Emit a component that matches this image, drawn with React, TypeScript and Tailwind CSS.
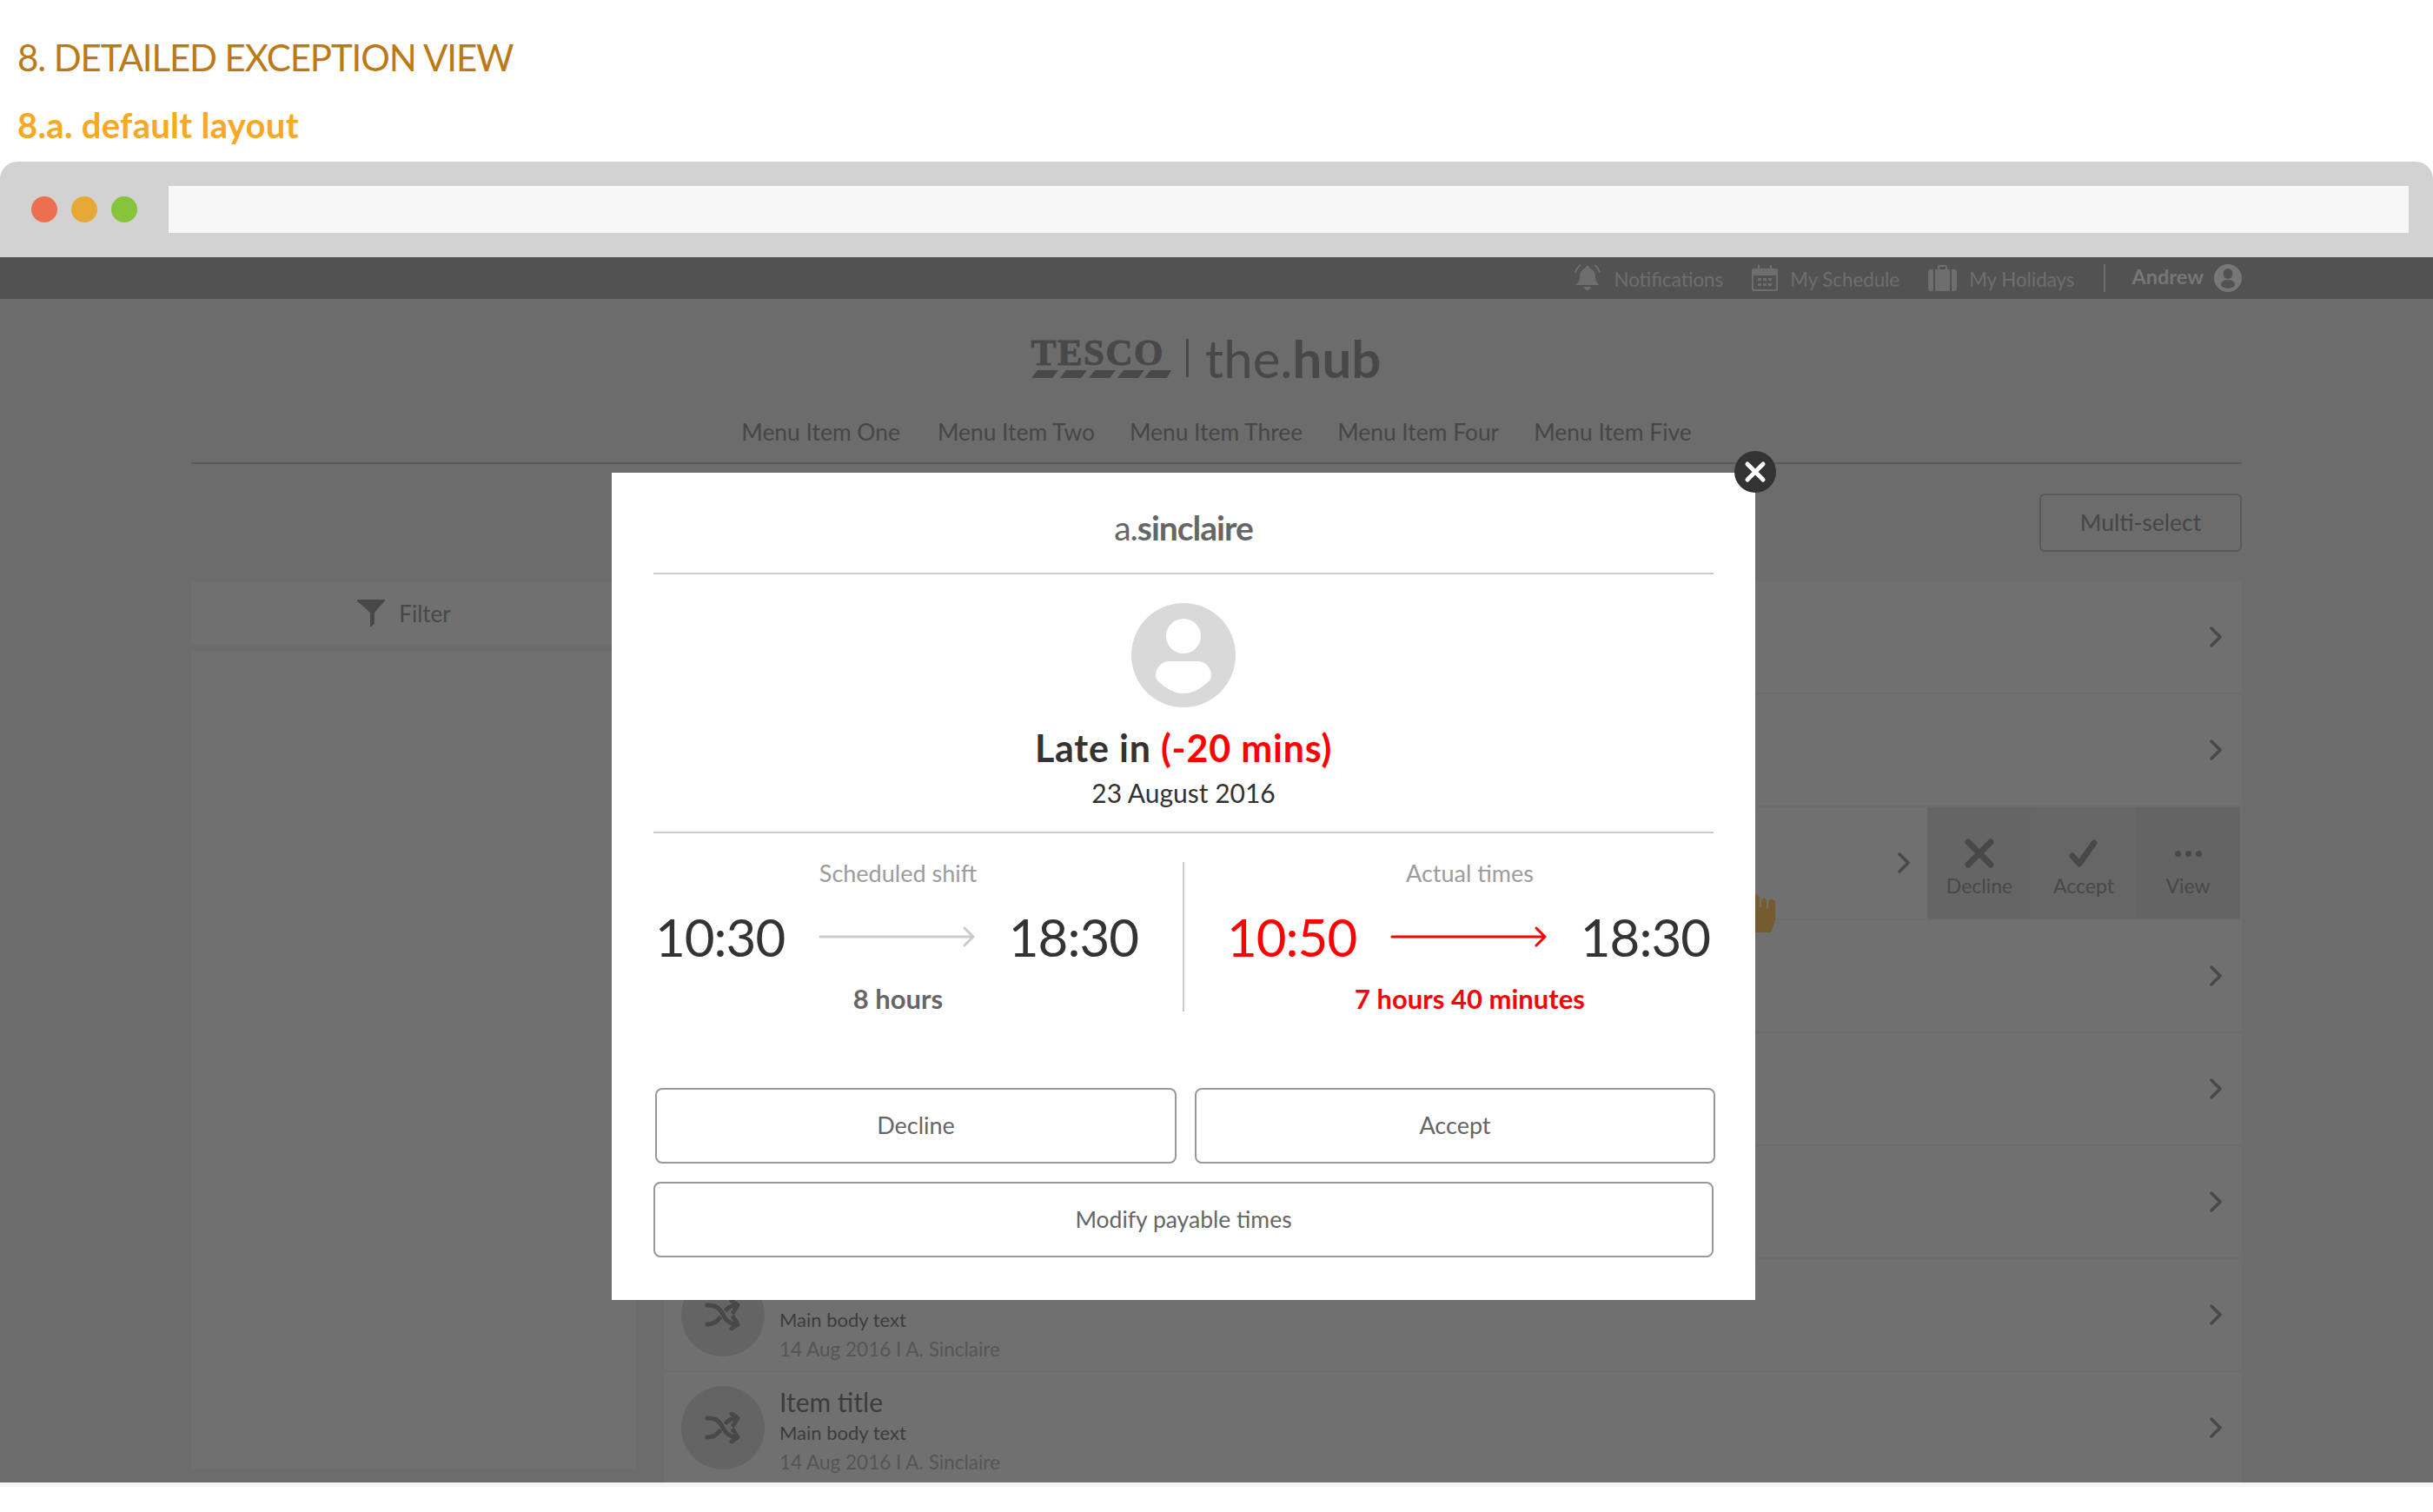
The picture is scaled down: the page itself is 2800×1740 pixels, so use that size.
import { ReactNode } from 'react';

const rows = [0, 1, 2, 3, 4, 5, 6, 7];

function Chevron({ className = '' }: { className?: string }) {
    return (
        <svg className={className} width="14" height="24" viewBox="0 0 14 24" fill="none" stroke="#484848" strokeWidth="3.5" strokeLinecap="round" strokeLinejoin="round">
            <path d="M2 2l10 10L2 22" />
        </svg>
    );
}

function ShuffleIcon() {
    return (
        <svg width="42" height="36" viewBox="0 0 42 36" fill="none" stroke="#484848" strokeWidth="5" strokeLinecap="round" strokeLinejoin="round">
            <path d="M3 7c12 0 15 5 18 11s7 11 16 11" />
            <path d="M3 29c7 0 11-3 14-7M25 12c3-3 6-5 12-5" />
            <path d="M31 2l7 5-5 8M33 21l5 8-7 5" />
        </svg>
    );
}

function TopLink({ icon, label }: { icon: ReactNode; label: string }) {
    return (
        <div className="flex items-center gap-[14px]">
            {icon}
            <span className="text-[22.3px] leading-none text-[#6e6e6e] mt-[4px]">{label}</span>
        </div>
    );
}

function ActionCell({ label, shade, children }: { label: string; shade: string; children: ReactNode }) {
    return (
        <div className={`flex-1 flex flex-col items-center pt-[36px] ${shade}`}>
            {children}
            <span className="text-[23px] leading-[30px] mt-[5px] text-[#484848]">{label}</span>
        </div>
    );
}

function ListRow({ index }: { index: number }) {
    const swiped = index === 2;
    // rows above the modal's bottom edge show nothing but their chevron
    const hasContent = index >= 6;
    return (
        <div className="relative h-[128px] flex items-center bg-[#707070] shrink-0">
            <div className="flex flex-1 items-center pl-[20px]">
                {hasContent && (
                    <>
                        <div className="w-[96px] h-[96px] rounded-full bg-[#646464] flex items-center justify-center shrink-0">
                            <ShuffleIcon />
                        </div>
                        <div className="ml-[17px] pt-[46px] flex flex-col text-[#3c3c3c]">
                            {index === 7 && <span className="-mt-[38px] text-[30px] leading-[38px]">Item title</span>}
                            <span className="text-[22px] leading-[34px]">Main body text</span>
                            <span className="text-[22.5px] leading-[34px] text-[#555555]">14 Aug 2016 I A. Sinclaire</span>
                        </div>
                    </>
                )}
            </div>
            {swiped ? (
                <>
                    <Chevron className="mr-[20px]" />
                    <div className="flex h-full w-[360px] mr-[2px]">
                        <ActionCell label="Decline" shade="bg-[#656565]">
                            <svg width="34" height="34" viewBox="0 0 34 34" stroke="#484848" strokeWidth="7" strokeLinecap="round"><path d="M4 4l26 26M30 4L4 30" /></svg>
                        </ActionCell>
                        <ActionCell label="Accept" shade="bg-[#666666]">
                            <svg width="34" height="34" viewBox="0 0 34 34" fill="none" stroke="#484848" strokeWidth="7" strokeLinecap="round" strokeLinejoin="round"><path d="M4 20l8 9L29 5" /></svg>
                        </ActionCell>
                        <ActionCell label="View" shade="bg-[#646464]">
                            <div className="h-[34px] flex items-center gap-[5px]">
                                <span className="w-[7px] h-[7px] rounded-full bg-[#484848]" />
                                <span className="w-[7px] h-[7px] rounded-full bg-[#484848]" />
                                <span className="w-[7px] h-[7px] rounded-full bg-[#484848]" />
                            </div>
                        </ActionCell>
                    </div>
                    {/* hand cursor, mostly behind the modal */}
                    <svg className="absolute z-10 left-[1236px] top-[100px]" width="44" height="45" viewBox="0 0 44 45" fill="#745b30">
                        <path d="M10 44V4a5 4 0 015-4h5a5 5 0 015 5v10h2V8a3 3 0 016 0v8h2v-6a4 4 0 018 0v20l-5 14z" />
                    </svg>
                </>
            ) : (
                <Chevron className="mr-[23px]" />
            )}
        </div>
    );
}

function TimeBlock({ title, start, end, total, late }: { title: string; start: string; end: string; total: string; late: boolean }) {
    const stroke = late ? '#ff0000' : '#cccccc';
    return (
        <div className="w-[553px] -mt-[4px] flex flex-col items-center">
            <span className="text-[27px] leading-[34px] text-[#9c9c9c]">{title}</span>
            <div className="w-full flex items-center justify-between mt-[21px] text-[60px] leading-[70px] tracking-[-1px] text-[#333333]">
                <span className={`-ml-[3px] ${late ? 'text-[#ff0000]' : ''}`}>{start}</span>
                <svg width="181" height="26" viewBox="0 0 181 26" fill="none" stroke={stroke} strokeWidth="3" strokeLinecap="round" strokeLinejoin="round">
                    <path d="M2 13h176M168 3l10 10-10 10" />
                </svg>
                <span>{end}</span>
            </div>
            <span className={`mt-[18px] text-[31px] leading-[36px] font-bold ${late ? 'text-[#ff0000]' : 'text-[#666666]'}`}>{total}</span>
        </div>
    );
}

export default function App() {
    return (
        <div className="relative h-[1740px] w-[2800px] overflow-hidden bg-white font-['Lato','Noto_Sans',sans-serif]">
            {/* Headings */}
            <div className="pl-[20px] pt-[42px] h-[186px]">
                <h1 className="text-[42px] leading-[48px] tracking-[-1.1px] text-[#bc7a17]">8. DETAILED EXCEPTION VIEW</h1>
                <h2 className="mt-[32px] text-[40px] leading-[44px] tracking-[0.3px] font-bold text-[#f9a825]">8.a. default layout</h2>
            </div>

            {/* Browser chrome */}
            <div className="h-[110px] rounded-t-[20px] bg-[#d2d2d2] flex items-center pl-[36px] pr-[28px]">
                <div className="flex gap-[16px]">
                    <span className="w-[30px] h-[30px] rounded-full bg-[#ec7050]" />
                    <span className="w-[30px] h-[30px] rounded-full bg-[#e6a935]" />
                    <span className="w-[30px] h-[30px] rounded-full bg-[#87c33b]" />
                </div>
                <div className="ml-[36px] flex-1 h-[54px] bg-[#f7f7f7]" />
            </div>

            {/* Dimmed page */}
            <div className="h-[1410px] overflow-hidden bg-[#6c6c6c]">
                <div className="h-[48px] bg-[#525252] flex items-center justify-end pr-[220px]">
                    <div className="flex items-center gap-[33px]">
                        <TopLink
                            label="Notifications"
                            icon={
                                <svg width="34" height="32" viewBox="0 0 34 32" fill="#6e6e6e">
                                    <path d="M17 2a2.5 2.5 0 012.5 2.5C24 6 26 10 26 15c0 4 2 7 5 9H3c3-2 5-5 5-9 0-5 2-9 6.5-10.5A2.5 2.5 0 0117 2zM13 26h8c0 2-2 4-4 4s-4-2-4-4z" />
                                    <path d="M9 1C6 3 4 6 3 10M25 1c3 2 5 5 6 9" fill="none" stroke="#6e6e6e" strokeWidth="2" />
                                </svg>
                            }
                        />
                        <TopLink
                            label="My Schedule"
                            icon={
                                <svg width="30" height="30" viewBox="0 0 30 30" fill="#6e6e6e">
                                    <path fillRule="evenodd" d="M2 4h5V0h2v4h12V0h2v4h5a2 2 0 012 2v22a2 2 0 01-2 2H2a2 2 0 01-2-2V6a2 2 0 012-2zm0 8v16h26V12zm5 3h4v3H7zm6 0h4v3h-4zm6 0h4v3h-4zM7 21h4v3H7zm6 0h4v3h-4zm6 0h4v3h-4z" />
                                </svg>
                            }
                        />
                        <TopLink
                            label="My Holidays"
                            icon={
                                <svg width="33" height="30" viewBox="0 0 33 30" fill="#6e6e6e">
                                    <path fillRule="evenodd" d="M11 5V2a2 2 0 012-2h7a2 2 0 012 2v3h3v25H8V5zm2 0h7V2h-7zM0 8a3 3 0 013-3h3v25H3a3 3 0 01-3-3zm27-3h3a3 3 0 013 3v19a3 3 0 01-3 3h-3z" />
                                </svg>
                            }
                        />
                    </div>
                    <div className="w-[2px] h-[32px] bg-[#6e6e6e] ml-[34px] mr-[30px]" />
                    <span className="text-[23.5px] leading-none font-bold text-[#777777] mb-[2px]">Andrew</span>
                    <svg className="ml-[12px]" width="32" height="32" viewBox="0 0 32 32">
                        <circle cx="16" cy="16" r="16" fill="#777777" />
                        <ellipse cx="16" cy="11" rx="5.5" ry="6" fill="#525252" />
                        <ellipse cx="16" cy="23" rx="8" ry="5" fill="#525252" />
                    </svg>
                </div>

                {/* Logo */}
                <div className="h-[94px] flex items-end justify-center pr-[24px]">
                    <div className="flex items-center text-[#484848]">
                        <div className="flex flex-col items-stretch">
                            <span className="font-['Liberation_Serif',serif] font-bold text-[43px] leading-[34px] tracking-[1.5px] [-webkit-text-stroke:1px_#484848]">TESCO</span>
                            <svg className="mt-[3px]" width="161" height="9" viewBox="0 0 161 9" fill="#484848">
                                <path d="M7 0h24l-7 9H0zM40 0h24l-7 9H33zM73 0h24l-7 9H66zM106 0h24l-7 9H99zM137 0h24l-5 9H130z" />
                            </svg>
                        </div>
                        <div className="w-[3px] h-[44px] bg-[#484848] ml-[17px] mr-[19px]" />
                        <span className="text-[60px] leading-[52px]">the.<span className="font-bold">hub</span></span>
                    </div>
                </div>

                <nav className="mt-[41px] flex justify-center gap-[40px] text-[26.4px] leading-[36px] text-[#464646]">
                    <span className="mr-[3px]">Menu Item One</span>
                    <span>Menu Item Two</span>
                    <span>Menu Item Three</span>
                    <span>Menu Item Four</span>
                    <span>Menu Item Five</span>
                </nav>

                <div className="mx-[220px] mt-[17px] h-[2px] bg-[#5b5b5b]" />

                <div className="mx-[220px] mt-[34px] flex justify-end">
                    <button className="w-[233px] h-[67px] rounded-[6px] border-2 border-[#595959] text-[26.5px] text-[#464646]">Multi-select</button>
                </div>

                <div className="mx-[220px] mt-[33px] flex gap-[32px]">
                    <div className="w-[512px] flex flex-col gap-[8px] pt-[2px]">
                        <div className="h-[72px] bg-[#707070] flex items-center justify-center gap-[16px] pr-[22px]">
                            <svg width="32" height="32" viewBox="0 0 32 32" fill="#484848">
                                <path d="M1 0h30a1 1 0 01.7 1.7L20 15v13l-5 4V15L.3 1.7A1 1 0 011 0z" />
                            </svg>
                            <span className="text-[26px] text-[#484848]">Filter</span>
                        </div>
                        <div className="h-[940px] bg-[#707070]" />
                    </div>
                    <div className="flex-1 flex flex-col gap-[2px] pt-[1px]">
                        {rows.map((r) => (
                            <ListRow key={r} index={r} />
                        ))}
                    </div>
                </div>
            </div>
            <div className="h-[5px] bg-[#f5f5f5]" />

            {/* Modal */}
            <div className="absolute z-20 left-[704px] top-[544px] w-[1316px] h-[952px] bg-white px-[48px] flex flex-col">
                <div className="h-[117px] border-b-2 border-[#cccccc] flex items-center justify-center pt-[12px] text-[39px] text-[#666666] tracking-[-1px]">
                    <span>a.<span className="font-bold">sinclaire</span></span>
                </div>
                <div className="flex flex-col items-center pt-[33px] h-[298px] border-b-2 border-[#cccccc]">
                    <svg width="120" height="120" viewBox="0 0 120 120">
                        <circle cx="60" cy="60" r="60" fill="#d9d9d9" />
                        <ellipse cx="60" cy="38" rx="20" ry="20" fill="#ffffff" />
                        <path d="M44 67h32c10 0 16 8 16 17 0 3-2 5-4 7-8 7-17 13-28 13s-20-6-28-13c-2-2-4-4-4-7 0-9 6-17 16-17z" fill="#ffffff" />
                    </svg>
                    <div className="mt-[22px] text-[43px] leading-[50px] tracking-[0.8px] font-bold text-[#333333]">
                        Late in <span className="text-[#ff0000]">(-20 mins)</span>
                    </div>
                    <div className="mt-[7px] text-[30px] leading-[38px] text-[#333333]">23 August 2016</div>
                </div>
                <div className="mt-[33px] ml-[5px] flex items-start h-[172px]">
                    <TimeBlock title="Scheduled shift" start="10:30" end="18:30" total="8 hours" late={false} />
                    <div className="w-[2px] h-full bg-[#cccccc] ml-[51px] mr-[52px]" />
                    <TimeBlock title="Actual times" start="10:50" end="18:30" total="7 hours 40 minutes" late />
                </div>
                <div className="mt-[88px] flex gap-[21px] pl-[2px] w-[1222px]">
                    <button className="w-[600px] h-[87px] rounded-[8px] border-2 border-[#999999] text-[27px] text-[#666666]">Decline</button>
                    <button className="w-[599px] h-[87px] rounded-[8px] border-2 border-[#999999] text-[27px] text-[#666666]">Accept</button>
                </div>
                <button className="mt-[21px] w-[1220px] h-[87px] rounded-[8px] border-2 border-[#999999] text-[26.5px] text-[#666666]">Modify payable times</button>

                <div className="absolute right-[-24px] top-[-25px] w-[48px] h-[48px] rounded-full bg-[#333333] flex items-center justify-center">
                    <svg width="26" height="26" viewBox="0 0 26 26" stroke="#ffffff" strokeWidth="5" strokeLinecap="round">
                        <path d="M4 4l18 18M22 4L4 22" />
                    </svg>
                </div>
            </div>
        </div>
    );
}
